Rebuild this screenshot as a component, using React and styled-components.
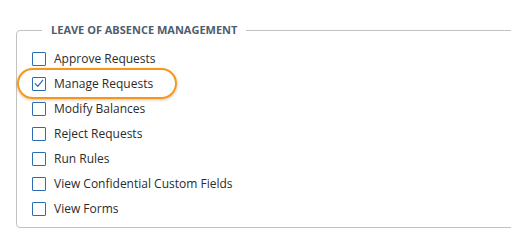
import React from 'react';
import styled, { createGlobalStyle } from 'styled-components';

const GlobalStyle = createGlobalStyle`
  html, body {
    margin: 0;
    padding: 0;
    background: #ffffff;
    overflow: hidden;
  }
  body {
    font-family: "Open Sans", "Noto Sans", Arial, sans-serif;
  }
`;

const Page = styled.div`
  width: 511px;
  height: 249px;
  padding: 23px 0 0 16px;
  box-sizing: border-box;
  overflow: hidden;
`;

const Group = styled.fieldset`
  width: 560px;
  margin: 0;
  padding: 9px 0 6px 15px;
  border: 1px solid #c2c2c2;
  border-radius: 4px;
  box-sizing: border-box;
  min-width: 0;
`;

const Legend = styled.legend`
  margin-left: 10px;
  padding: 0 9px;
  font-size: 11px;
  line-height: 14px;
  font-weight: 700;
  letter-spacing: 0;
  color: #4e5d6f;
  text-transform: uppercase;
`;

const List = styled.div`
  display: flex;
  flex-direction: column;
`;

const Row = styled.label`
  position: relative;
  display: flex;
  align-items: center;
  gap: 8px;
  height: 25px;
  font-size: 12px;
  color: #2b2b2b;
  cursor: pointer;

  &::before {
    content: '';
    display: ${(p) => (p.$highlight ? 'block' : 'none')};
    position: absolute;
    left: -15px;
    top: -3px;
    width: 160px;
    height: 31px;
    box-sizing: border-box;
    border: 2.5px solid #f5961e;
    border-radius: 16px;
    box-shadow: 0 1px 3px rgba(170, 100, 20, 0.4);
    pointer-events: none;
  }
`;

const Box = styled.span`
  width: 14px;
  height: 14px;
  box-sizing: border-box;
  border: 1.5px solid #2b6cb3;
  border-radius: 1px;
  background: #fff;
  display: flex;
  align-items: center;
  justify-content: center;
  flex-shrink: 0;
`;

const items = [
  { label: 'Approve Requests' },
  { label: 'Manage Requests', checked: true, highlight: true },
  { label: 'Modify Balances' },
  { label: 'Reject Requests' },
  { label: 'Run Rules' },
  { label: 'View Confidential Custom Fields' },
  { label: 'View Forms' },
];

const Check = () => (
  <svg width="10" height="9" viewBox="0 0 10 9" fill="none">
    <path d="M1.2 4.6 L3.8 7.3 L8.8 1.2" stroke="#2b6cb3" strokeWidth="1.2" strokeLinecap="round" strokeLinejoin="round" />
  </svg>
);

export default function App() {
  return (
    <>
      <GlobalStyle />
      <Page>
        <Group>
          <Legend>Leave of Absence Management</Legend>
          <List>
            {items.map((it) => (
              <Row key={it.label} $highlight={it.highlight}>
                <Box>{it.checked && <Check />}</Box>
                {it.label}
              </Row>
            ))}
          </List>
        </Group>
      </Page>
    </>
  );
}
